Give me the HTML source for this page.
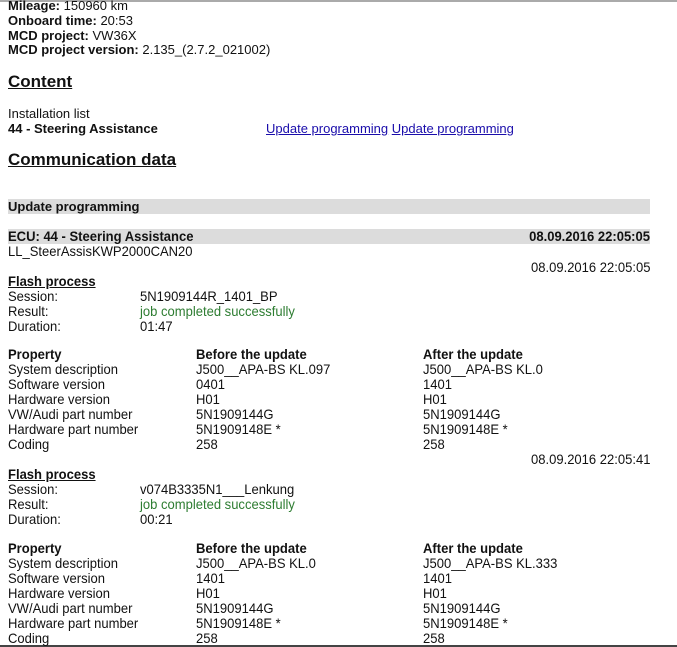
<!DOCTYPE html>
<html><head><meta charset="utf-8"><style>
body{margin:0;width:677px;height:647px;background:#fff;position:relative;overflow:hidden;font-family:"Liberation Sans",Arial,sans-serif;color:#111}
div{position:absolute;white-space:nowrap;line-height:15px}
.t{font-size:13px}
.c{font-size:14px;transform:scaleX(0.93);transform-origin:0 0}
.r{transform-origin:100% 0}
b{font-weight:bold}
.h{font-size:17px;font-weight:bold;text-decoration:underline;line-height:20px}
a{color:#1a0dab;text-decoration:underline}
.g{color:#2e7d32}
.bar{background:#dcdcdc;height:15px}
</style></head><body>
<div style="left:0;top:0;width:677px;height:2px;background:#aaa"></div>
<div style="left:0;top:645px;width:677px;height:2px;background:#444"></div>
<div class="t" style="left:8px;top:-2px"><b>Mileage:</b> 150960 km</div>
<div class="t" style="left:8px;top:13px"><b>Onboard time:</b> 20:53</div>
<div class="t" style="left:8px;top:28px"><b>MCD project:</b> VW36X</div>
<div class="t" style="left:8px;top:42px"><b>MCD project version:</b> 2.135_(2.7.2_021002)</div>
<div class="h" style="left:8px;top:72px">Content</div>
<div class="t" style="left:8px;top:106px">Installation list</div>
<div class="t" style="left:8px;top:121px"><b>44 - Steering Assistance</b></div>
<div class="t" style="left:266px;top:121px"><a>Update programming</a> <a>Update programming</a></div>
<div class="h" style="left:8px;top:150px">Communication data</div>
<div class="bar" style="left:8px;top:199px;width:642px"></div>
<div class="t" style="left:8px;top:199px"><b>Update programming</b></div>
<div class="bar" style="left:8px;top:229px;width:642px"></div>
<div class="c" style="left:8px;top:229px"><b>ECU: 44 - Steering Assistance</b></div>
<div class="c r" style="right:27px;top:229px"><b>08.09.2016 22:05:05</b></div>
<div class="c" style="left:8px;top:244px">LL_SteerAssisKWP2000CAN20</div>
<div class="c r" style="right:27px;top:260px">08.09.2016 22:05:05</div>
<div class="c" style="left:8px;top:274px"><b style="text-decoration:underline">Flash process</b></div>
<div class="c" style="left:8px;top:289px">Session:</div><div class="c" style="left:140px;top:289px">5N1909144R_1401_BP</div>
<div class="c" style="left:8px;top:304px">Result:</div><div class="c g" style="left:140px;top:304px">job completed successfully</div>
<div class="c" style="left:8px;top:319px">Duration:</div><div class="c" style="left:140px;top:319px">01:47</div>
<div class="c" style="left:8px;top:347px;line-height:15px"><b>Property</b><br>System description<br>Software version<br>Hardware version<br>VW/Audi part number<br>Hardware part number<br>Coding</div>
<div class="c" style="left:196px;top:347px"><b>Before the update</b><br>J500__APA-BS KL.097<br>0401<br>H01<br>5N1909144G<br>5N1909148E *<br>258</div>
<div class="c" style="left:423px;top:347px"><b>After the update</b><br>J500__APA-BS KL.0<br>1401<br>H01<br>5N1909144G<br>5N1909148E *<br>258</div>
<div class="c r" style="right:27px;top:452px">08.09.2016 22:05:41</div>
<div class="c" style="left:8px;top:467px"><b style="text-decoration:underline">Flash process</b></div>
<div class="c" style="left:8px;top:482px">Session:</div><div class="c" style="left:140px;top:482px">v074B3335N1___Lenkung</div>
<div class="c" style="left:8px;top:497px">Result:</div><div class="c g" style="left:140px;top:497px">job completed successfully</div>
<div class="c" style="left:8px;top:512px">Duration:</div><div class="c" style="left:140px;top:512px">00:21</div>
<div class="c" style="left:8px;top:541px"><b>Property</b><br>System description<br>Software version<br>Hardware version<br>VW/Audi part number<br>Hardware part number<br>Coding</div>
<div class="c" style="left:196px;top:541px"><b>Before the update</b><br>J500__APA-BS KL.0<br>1401<br>H01<br>5N1909144G<br>5N1909148E *<br>258</div>
<div class="c" style="left:423px;top:541px"><b>After the update</b><br>J500__APA-BS KL.333<br>1401<br>H01<br>5N1909144G<br>5N1909148E *<br>258</div>
</body></html>
